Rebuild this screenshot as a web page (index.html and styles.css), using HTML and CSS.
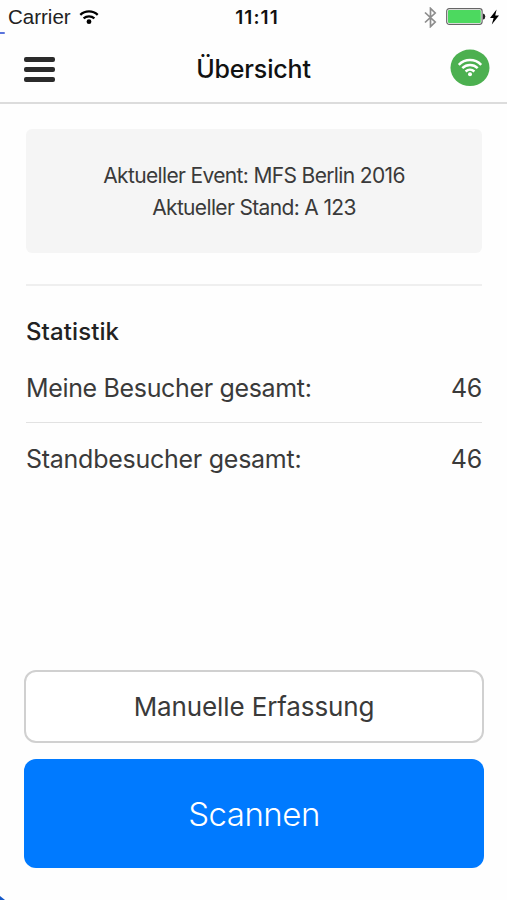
FILE: index.html
```html
<!DOCTYPE html>
<html lang="de">
<head>
    <meta charset="UTF-8">
    <meta name="viewport" content="width=device-width, initial-scale=1.0">
    <title>Übersicht</title>
    <link rel="stylesheet" href="styles.css">
</head>
<body>
    <div class="app">
        <!-- Statusleiste -->
        <div class="status-bar">
            <div class="carrier">
                <span>Carrier</span>
                <svg class="wifi" width="20" height="15" viewBox="0 0 20 15" fill="none" stroke="#000" stroke-width="2.3">
                    <path d="M1.3 4.9C6.2.3 13.8.3 18.7 4.9"/>
                    <path d="M4.6 8.4C7.7 5.6 12.3 5.6 15.4 8.4"/>
                    <circle cx="10" cy="11.7" r="2.4" fill="#000" stroke="none"/>
                </svg>
            </div>
            <span class="time">11:11</span>
            <div class="battery-info">
                <svg width="13" height="21" viewBox="0 0 13 21" fill="none" stroke="#8c8c8c" stroke-width="1.7">
                    <path d="M1 5.5L11.2 15L6.5 19.6V1.4L11.2 6L1 15.5"/>
                </svg>
                <svg class="battery" width="40" height="18" viewBox="0 0 40 18">
                    <rect x=".7" y=".7" width="35.4" height="15.6" rx="2.5" fill="#fff" stroke="#666" stroke-width="1.2"/>
                    <rect x="2" y="2" width="32.8" height="13" rx="1" fill="#4cd95f"/>
                    <path d="M37 5.5q2.3.4 2.3 3t-2.3 3z" fill="#222"/>
                </svg>
                <svg class="bolt" width="9" height="16" viewBox="0 0 9 16">
                    <path d="M6.6.5L0 9h3.6L1.8 15.5L9 6.4H5.2z" fill="#000"/>
                </svg>
            </div>
        </div>

        <!-- Kopfzeile -->
        <header class="header">
            <button class="menu" aria-label="Menü">
                <span></span>
                <span></span>
                <span></span>
            </button>
            <h1>Übersicht</h1>
            <svg class="online" width="40" height="38" viewBox="0 0 40 38" fill="none" stroke="#fff" stroke-width="2.5">
                <ellipse cx="20" cy="18.8" rx="19.5" ry="18.3" fill="#4cb050" stroke="none"/>
                <path d="M8.8 15.8C15.1 9.5 24.9 9.5 31.2 15.8"/>
                <path d="M12.3 19.2C16.7 15 23.3 15 27.7 19.2"/>
                <path d="M15.6 22.5C18.2 20.2 21.8 20.2 24.4 22.5"/>
                <circle cx="20" cy="25.3" r="2" fill="#fff" stroke="none"/>
            </svg>
        </header>

        <main class="content">
            <div class="event-box">
                <div class="event">Aktueller Event: MFS Berlin 2016</div>
                <div class="booth">Aktueller Stand: A 123</div>
            </div>

            <section class="stats">
                <h2>Statistik</h2>
                <div class="stat-row">
                    <span>Meine Besucher gesamt:</span>
                    <span class="value">46</span>
                </div>
                <div class="stat-row">
                    <span>Standbesucher gesamt:</span>
                    <span class="value">46</span>
                </div>
            </section>

            <div class="actions">
                <button class="btn btn-manual">Manuelle Erfassung</button>
                <button class="btn btn-scan">Scannen</button>
            </div>
        </main>
        <div class="edge-top"></div>
        <div class="edge-bottom"></div>
    </div>
</body>
</html>
```

FILE: styles.css
```css
* {
    box-sizing: border-box;
}
body {
    margin: 0;
    font-family: Inter, "Liberation Sans", sans-serif;
    background-color: #fefefe;
    color: #3a3a3a;
}
button {
    font-family: inherit;
    cursor: pointer;
}
.app {
    position: relative;
    display: flex;
    flex-direction: column;
    height: 900px;
    overflow: hidden;
}
/* Statusleiste */
.status-bar {
    display: grid;
    grid-template-columns: 1fr auto 1fr;
    align-items: center;
    height: 34px;
    padding: 0 8px 0 8px;
    color: #222;
}
.carrier {
    display: flex;
    align-items: center;
    gap: 8px;
    font-family: "Liberation Sans", sans-serif;
    font-size: 20.5px;
}
.time {
    padding-left: 7px;
    font-size: 19px;
    font-weight: 600;
    letter-spacing: 1.1px;
    color: #111;
}
.battery-info {
    display: flex;
    align-items: center;
    justify-content: flex-end;
}
.battery {
    margin: 0 4px 0 9px;
}
/* Kopfzeile */
.header {
    display: grid;
    grid-template-columns: 1fr auto 1fr;
    align-items: center;
    height: 70px;
    padding: 2px 16px 0 24px;
    border-bottom: 2px solid #dcdcdc;
}
.header h1 {
    margin: 0;
    padding-right: 8px;
    font-size: 25px;
    font-weight: 500;
    letter-spacing: -0.15px;
    color: #111;
}
.menu {
    display: flex;
    flex-direction: column;
    gap: 5px;
    width: 31px;
    padding: 0;
    border: none;
    background: none;
}
.menu span {
    width: 31px;
    height: 5px;
    border-radius: 2px;
    background-color: #2b2b2b;
}
.online {
    justify-self: end;
    margin: 0 1px 2px 0;
}
.content {
    display: flex;
    flex: 1;
    flex-direction: column;
    padding: 25px 25px 32px 26px;
}
.event-box {
    height: 124px;
    padding-top: 31px;
    border-radius: 6px;
    background-color: #f5f5f5;
    font-size: 21px;
    line-height: 32px;
    letter-spacing: -0.65px;
    text-align: center;
}
/* Statistik */
.stats {
    margin-top: 31px;
    border-top: 2px solid #efefef;
}
.stats h2 {
    margin: 31px 0 5px;
    font-size: 24px;
    font-weight: 500;
    line-height: 30px;
    letter-spacing: 0.1px;
    color: #222;
}
.stat-row {
    display: flex;
    align-items: center;
    justify-content: space-between;
    height: 70px;
    padding-top: 1px;
    font-size: 25px;
    letter-spacing: -0.34px;
}
.stat-row + .stat-row {
    height: 72px;
    border-top: 1px solid #e2e2e2;
    letter-spacing: -0.26px;
}
/* Buttons */
.actions {
    display: flex;
    flex-direction: column;
    gap: 16px;
    margin: auto -2px 0;
}
.btn {
    border-radius: 12px;
}
.btn-manual {
    height: 73px;
    border: 2px solid #d0d0d0;
    background-color: #fff;
    font-size: 26px;
    letter-spacing: -0.12px;
    color: #3a3a3a;
}
.btn-scan {
    height: 109px;
    border: none;
    background-color: #007aff;
    font-size: 33px;
    font-weight: 300;
    letter-spacing: -0.5px;
    color: #fff;
}
/* Blaue Ecken am linken Rand */
.edge-top {
    position: absolute;
    top: 32px;
    left: 0;
    width: 5px;
    height: 2px;
    border-radius: 0 2px 2px 0;
    background-color: #5a74dc;
}
.edge-bottom {
    position: absolute;
    bottom: 0;
    left: 0;
    width: 5px;
    height: 4px;
    background-color: #1458c8;
    clip-path: polygon(0 0, 100% 100%, 0 100%);
}
```
